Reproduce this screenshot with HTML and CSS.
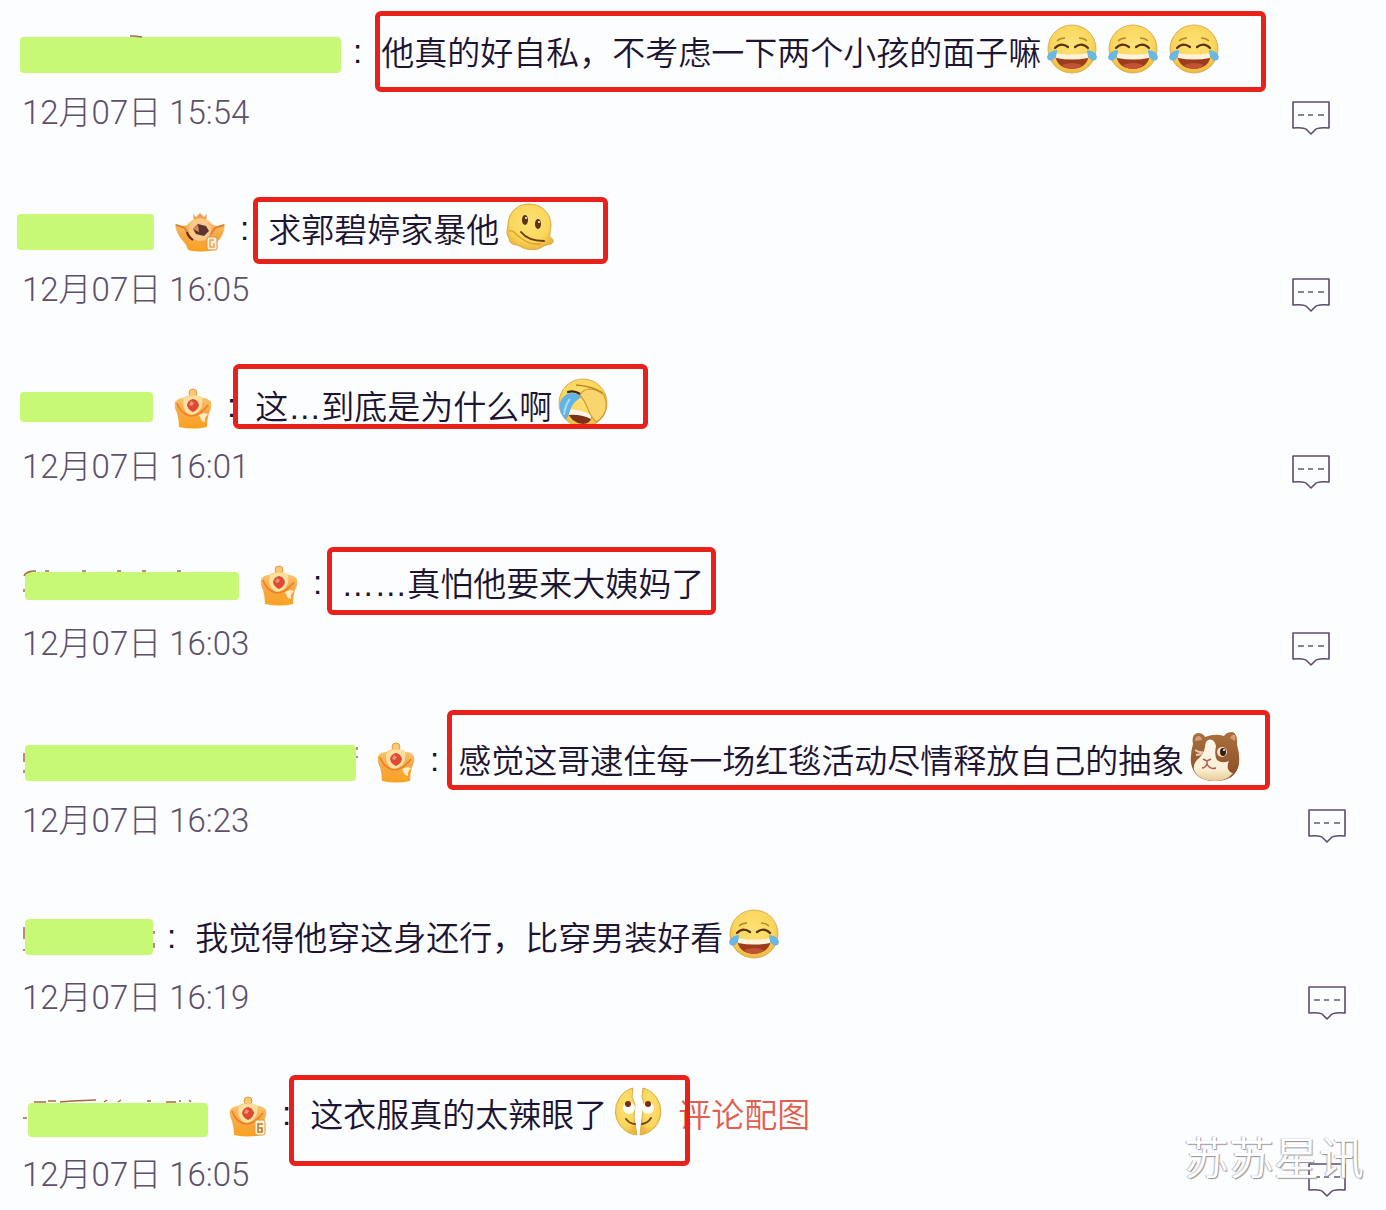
FILE: index.html
```
<!DOCTYPE html>
<html lang="zh-CN">
<head>
    <meta charset="UTF-8">
    <meta name="viewport" content="width=device-width, initial-scale=1.0">
    <title>评论</title>
    <link rel="stylesheet" href="styles.css">
</head>
<body>
    <!-- shared icons -->
    <svg class="sprite" aria-hidden="true">
        <defs>
            <radialGradient id="face" cx="0.5" cy="0.4" r="0.6">
                <stop offset="0" stop-color="#fde277"/>
                <stop offset="0.7" stop-color="#fad65c"/>
                <stop offset="1" stop-color="#eeb63c"/>
            </radialGradient>
            <linearGradient id="gold" x1="0" y1="0" x2="0" y2="1">
                <stop offset="0" stop-color="#fbc873"/>
                <stop offset="0.5" stop-color="#f7a848"/>
                <stop offset="1" stop-color="#f9a21f"/>
            </linearGradient>
            <linearGradient id="fur" x1="0" y1="0" x2="0" y2="1">
                <stop offset="0" stop-color="#a9703f"/>
                <stop offset="1" stop-color="#8a4c22"/>
            </linearGradient>
            <linearGradient id="cheek" x1="0" y1="0" x2="0" y2="1">
                <stop offset="0" stop-color="#fdf6ec"/>
                <stop offset="0.7" stop-color="#fbf0d6"/>
                <stop offset="1" stop-color="#e5cd95"/>
            </linearGradient>
        </defs>
        <symbol id="joy" viewBox="0 0 50 50">
            <circle cx="25" cy="25" r="24" fill="url(#face)" stroke="#d9b25a" stroke-width="1"/>
            <path d="M10 17q3-3 8-3M32 14q5 0 8 3" fill="none" stroke="#b98a2c" stroke-width="1.5"/>
            <path d="M8 24q6-6 13-1M28 23q7-5 13 1" fill="none" stroke="#5a3211" stroke-width="2.2" stroke-linecap="round"/>
            <path d="M8 30q17 3 34 0q-1 14-17 15q-16-1-17-15z" fill="#9c3c1c"/>
            <path d="M8 29q17 3 34 0l-1 5q-16 3-32 0z" fill="#fff3dc"/>
            <path d="M15 41q10-4 20 0q-4 4-10 4t-10-4z" fill="#c25236"/>
            <path d="M10 26q-9 1-10 7q1 5 6 3q4-3 4-10zM40 26q9 1 10 7q-1 5-6 3q-4-3-4-10z" fill="#69b7e3"/>
        </symbol>
        <symbol id="melt" viewBox="0 0 50 50">
            <path d="M3 24C3 11 13 3 24 3c12 0 21 8 22 20c0 6-2 10-1 14c4 0 4 5 1 6c-4 1-6 1-9 3c-4 3-10 3-15 2c-4 0-6-3-10-4c-5 0-8-3-8-7c-3-3-2-8-1-13z" fill="url(#face)" stroke="#dda93a" stroke-width="1"/>
            <path d="M4 30q4-1 6 2t6 5q8 7 20 6" fill="none" stroke="#e0a32f" stroke-width="1.6"/>
            <ellipse cx="20" cy="19" rx="3" ry="5" fill="#5b3413"/>
            <ellipse cx="33" cy="23" rx="3" ry="5" fill="#5b3413"/>
            <circle cx="21" cy="17" r="1" fill="#fff"/>
            <circle cx="34" cy="21" r="1" fill="#fff"/>
            <path d="M16 31q7 9 23 9" fill="none" stroke="#6d3d12" stroke-width="2" stroke-linecap="round"/>
        </symbol>
        <symbol id="palm" viewBox="0 0 50 50">
            <circle cx="25" cy="25" r="24" fill="url(#face)" stroke="#d9b25a" stroke-width="1"/>
            <path d="M9 33q12 0 25 6q-2 7-9 7q-12-1-16-13z" fill="#7d3218"/>
            <path d="M10 31q12 0 24 6l-1 4q-11-5-22-4z" fill="#fff6e6"/>
            <path d="M9 16q8-3 15 3q-8 4-11 11q-2 7-5 12q-8-8-6-17q2-6 7-9z" fill="#62b4e6"/>
            <path d="M12 21q-5 6-6 16" fill="none" stroke="#a8daf5" stroke-width="2"/>
            <path d="M10 14q6-2 12 2" fill="none" stroke="#3f2410" stroke-width="2.2" stroke-linecap="round"/>
            <path d="M22 17q3-6 10-6q8 1 14 6q4 9 1 17q-3 7-9 10q-5-5-8-13q-3-8-8-14z" fill="#f8d56d" stroke="#cf9c37" stroke-width="1.2"/>
            <path d="M18 7q16 1 27 8" fill="none" stroke="#b88528" stroke-width="1.4"/>
        </symbol>
        <symbol id="hamster" viewBox="0 0 50 50">
            <path d="M3 12Q1 2 8 1q5 0 7 4q10-4 19-1q2-4 9-4q5 3 4 13q3 9 2 19q-3 17-24 17Q4 49 1 31q-1-9 2-19z" fill="url(#fur)"/>
            <path d="M5 9q0-5 4-5q3 1 3 4zM40 6q2-4 5-3q1 3 0 6z" fill="#d79d75"/>
            <path d="M18 8q6-2 8 6q-2 9 1 14q5 4 12 1q-2 3-1 8q2 4 5 4q-6 8-18 8Q9 49 4 38q-1-6 3-10q7-6 8-13q0-5 3-7z" fill="url(#cheek)"/>
            <ellipse cx="32" cy="20" rx="5" ry="5" fill="#f2dfce"/>
            <ellipse cx="33" cy="20" rx="3" ry="4" fill="#3d1c10"/>
            <circle cx="34" cy="18" r="1" fill="#fff"/>
            <path d="M5 18q4 3 8 2M6 23q4 0 6-2" fill="none" stroke="#f0c9b8" stroke-width="1.8"/>
            <path d="M13 27l4 2l4-2M17 29v3q-2 4-5 4M17 32q3 6 9 4" fill="none" stroke="#b05a48" stroke-width="1.5"/>
        </symbol>
        <symbol id="split" viewBox="0 0 50 50">
            <path d="M20 2l-1 9l3 7l-1 14l3 17A24 24 0 0 1 20 2z" fill="url(#face)" stroke="#d8ae4b" stroke-width="1"/>
            <path d="M30 2l-1 9l2 7l-2 14l-2 17A24 24 0 0 0 30 2z" fill="url(#face)" stroke="#d8ae4b" stroke-width="1"/>
            <circle cx="16" cy="22" r="6" fill="#fffdf6"/>
            <circle cx="35" cy="22" r="6" fill="#fffdf6"/>
            <circle cx="15" cy="18" r="3" fill="#7c2a14"/>
            <circle cx="35" cy="18" r="3" fill="#7c2a14"/>
            <path d="M13 33q4 5 9 5M29 38q6-1 9-6" fill="none" stroke="#7a4815" stroke-width="2" stroke-linecap="round"/>
        </symbol>
        <symbol id="crown" viewBox="0 0 38 42">
            <circle cx="19" cy="5" r="4" fill="#fbc878" stroke="#e99b3c" stroke-width="1"/>
            <path d="M1 14q3-4 8-4q4-3 10-3t10 3q5 0 8 4q1 6-2 11q-2 7-2 14q-13 3-28 0q0-7-2-14Q0 20 1 14z" fill="url(#gold)"/>
            <path d="M10 10q-3 10 4 16q5 2 9-1q7-5 5-16q-9-3-18 1z" fill="#fde0a0"/>
            <path d="M3 15q3 10 13 13q10 0 18-11" fill="none" stroke="#e98322" stroke-width="1.6"/>
            <path d="M19 11q5 1 6 6q-1 5-6 7q-5-2-6-7q1-5 6-6z" fill="#dc4a32"/>
            <path d="M17 13l3 2l-2 3l-3-1z" fill="#f2907b"/>
            <path d="M25 27l5-2l4 1l-3 4v4l-3-1z" fill="#fdebc8"/>
        </symbol>
        <symbol id="crown-6" viewBox="0 0 38 42">
            <use href="#crown" width="38" height="42"/>
            <rect x="26" y="24" width="10" height="15" rx="2" fill="#fff4dd" stroke="#e09a3e" stroke-width="1"/>
            <path d="M34 28h-5v8h4v-4h-3" fill="none" stroke="#b9772b" stroke-width="1.6"/>
        </symbol>
        <symbol id="ingot" viewBox="0 0 50 40">
            <path d="M18 2l3 3l4-4l4 4l3-3l-1 8H19z" fill="#ee9f55"/>
            <path d="M0 12q5 3 12 1q6-7 13-7t13 7q7 2 12-1q-1 11-7 17q-3 4-4 9q-14 3-26 0q-1-5-5-9Q1 22 0 12z" fill="url(#gold)"/>
            <path d="M1 13l9 3q3 8 8 12M49 13l-9 3q-3 5-6 8" fill="none" stroke="#dd8236" stroke-width="2"/>
            <circle cx="25" cy="18" r="11" fill="#fac98b"/>
            <path d="M12 20q1 5 6 8" fill="none" stroke="#69290f" stroke-width="2"/>
            <path d="M18 17l5-5l8 2l3 5l-5 5l-8-2z" fill="#5c3431"/>
            <path d="M18 17l5-4l1 7z" fill="#e78a4a"/>
            <rect x="32" y="25" width="10" height="13" rx="2" fill="#fff0d8" stroke="#dc9144" stroke-width="1"/>
            <path d="M39 28h-4v7h4v-4" fill="none" stroke="#e5a45b" stroke-width="1.4"/>
        </symbol>
        <symbol id="reply" viewBox="0 0 40 36">
            <path d="M2 2h36v26q-12-1-14 2l-4 4l-4-4q-2-3-14-2z" fill="none" stroke="#5b4b70" stroke-width="1.6" stroke-linejoin="round"/>
            <path d="M7 15h6M17 15h5M27 15h6" stroke="#62597c" stroke-width="1.4"/>
        </symbol>
    </svg>

    <main class="comments">
        <article class="comment">
            <div class="line">
                <span class="name name-1">
                    <svg class="traces" viewBox="0 0 321 36"><path d="M110-1h4l8 1"/></svg>
                </span>
                <span class="colon">:</span>
                <p class="text">他真的好自私，不考虑一下两个小孩的面子嘛<svg class="emoji"><use href="#joy"/></svg><svg class="emoji"><use href="#joy"/></svg><svg class="emoji"><use href="#joy"/></svg><span class="mark mark-1"></span></p>
            </div>
            <div class="meta">
                <time>12月07日 15:54</time>
                <button type="button" class="reply" aria-label="回复"><svg><use href="#reply"/></svg></button>
            </div>
        </article>

        <article class="comment">
            <div class="line">
                <span class="name name-2"></span>
                <svg class="badge badge-wide"><use href="#ingot"/></svg>
                <span class="colon">:</span>
                <p class="text">求郭碧婷家暴他<svg class="emoji"><use href="#melt"/></svg><span class="mark mark-2"></span></p>
            </div>
            <div class="meta">
                <time>12月07日 16:05</time>
                <button type="button" class="reply" aria-label="回复"><svg><use href="#reply"/></svg></button>
            </div>
        </article>

        <article class="comment">
            <div class="line">
                <span class="name name-3"></span>
                <svg class="badge"><use href="#crown"/></svg>
                <span class="colon">:</span>
                <p class="text">这…到底是为什么啊<svg class="emoji"><use href="#palm"/></svg><span class="mark mark-3"></span></p>
            </div>
            <div class="meta">
                <time>12月07日 16:01</time>
                <button type="button" class="reply" aria-label="回复"><svg><use href="#reply"/></svg></button>
            </div>
        </article>

        <article class="comment">
            <div class="line">
                <span class="name name-4">
                    <svg class="traces" viewBox="0 0 214 28"><path d="M-1 4q2-5 12-5M-1 17v3M20-1h4M57-1h4M92-1h4M117-1h4M152-1h4"/></svg>
                </span>
                <svg class="badge"><use href="#crown"/></svg>
                <span class="colon">:</span>
                <p class="text">……真怕他要来大姨妈了<span class="mark mark-4"></span></p>
            </div>
            <div class="meta">
                <time>12月07日 16:03</time>
                <button type="button" class="reply" aria-label="回复"><svg><use href="#reply"/></svg></button>
            </div>
        </article>

        <article class="comment comment-wide">
            <div class="line">
                <span class="name name-5">
                    <svg class="traces" viewBox="0 0 331 36"><path d="M-1 8v9M-1 25v3M332 2v3M332 11v2"/></svg>
                </span>
                <svg class="badge"><use href="#crown"/></svg>
                <span class="colon">:</span>
                <p class="text">感觉这哥逮住每一场红毯活动尽情释放自己的抽象<svg class="emoji"><use href="#hamster"/></svg><span class="mark mark-5"></span></p>
            </div>
            <div class="meta">
                <time>12月07日 16:23</time>
                <button type="button" class="reply" aria-label="回复"><svg><use href="#reply"/></svg></button>
            </div>
        </article>

        <article class="comment comment-wide">
            <div class="line">
                <span class="name name-6">
                    <svg class="traces" viewBox="0 0 128 36"><path d="M-1 8v12M-1 30v2M129 12v3M129 24v5"/></svg>
                </span>
                <span class="colon">:</span>
                <p class="text">我觉得他穿这身还行，比穿男装好看<svg class="emoji"><use href="#joy"/></svg></p>
            </div>
            <div class="meta">
                <time>12月07日 16:19</time>
                <button type="button" class="reply" aria-label="回复"><svg><use href="#reply"/></svg></button>
            </div>
        </article>

        <article class="comment comment-wide">
            <div class="line">
                <span class="name name-7">
                    <svg class="traces" viewBox="0 0 180 34"><path d="M-5 15h4M6-1h12M20-2h8M32-1l12-1l24-1M76-1l3-2M90-1l3-2M119-2h4M138-1h10M152-3v2M161-3l2 2"/></svg>
                </span>
                <svg class="badge"><use href="#crown-6"/></svg>
                <span class="colon">:</span>
                <p class="text">这衣服真的太辣眼了<svg class="emoji"><use href="#split"/></svg><a class="picture-link" href="#">评论配图</a><span class="mark mark-7"></span></p>
            </div>
            <div class="meta">
                <time>12月07日 16:05</time>
                <button type="button" class="reply" aria-label="回复"><svg><use href="#reply"/></svg></button>
            </div>
        </article>

        <div class="watermark">苏苏星讯</div>
    </main>
</body>
</html>
```

FILE: styles.css
```
* {
    box-sizing: border-box;
}
body {
    margin: 0;
    background-color: #fcfdff;
    color: #1c1430;
    font-family: "Liberation Sans", "Noto Sans CJK SC", sans-serif;
    font-size: 33px;
    font-weight: 350;
}
.sprite {
    position: absolute;
    width: 0;
    height: 0;
}
.comments {
    position: relative;
}
.comment {
    padding: 24px 55px 35px 0;
}
.comment-wide {
    padding-right: 39px;
}
.comment:nth-of-type(7) {
    padding-bottom: 0;
}
.line {
    display: flex;
    align-items: center;
    height: 56px;
    white-space: nowrap;
}

/* covered user names */
.name {
    position: relative;
    flex-shrink: 0;
    height: 36px;
    margin-top: 6px;
    border-radius: 4px;
    background-color: #c8f976;
}
.name-1 {
    width: 321px;
    margin-left: 20px;
}
.name-2 {
    width: 137px;
    margin-left: 17px;
}
.name-3 {
    width: 133px;
    height: 30px;
    margin-top: 2px;
    margin-left: 20px;
}
.name-4 {
    width: 214px;
    height: 28px;
    margin-left: 25px;
}
.name-5 {
    width: 331px;
    margin-left: 25px;
}
.name-6 {
    width: 128px;
    margin: 0 2px 0 25px;
}
.name-7 {
    width: 180px;
    height: 34px;
    margin-top: 12px;
    margin-left: 28px;
}
.traces {
    display: block;
    width: 100%;
    height: 100%;
    overflow: visible;
    fill: none;
    stroke: #a56a45;
    stroke-width: 1.5;
}
.badge {
    flex-shrink: 0;
    width: 38px;
    height: 42px;
    margin: 6px 3px 0 21px;
}
.badge-wide {
    width: 50px;
    height: 40px;
}
.colon {
    margin: 0 19px 0 12px;
}
.text {
    position: relative;
    display: flex;
    align-items: center;
    height: 56px;
    margin: 0;
    padding-bottom: 3px;
}
.emoji {
    width: 50px;
    height: 50px;
    margin: 0 5px 3px 6px;
}
.picture-link {
    margin-left: 10px;
    color: #e0604f;
    text-decoration: none;
}

/* red frames drawn over the comments */
.mark {
    position: absolute;
    border: 5px solid #e8211b;
    border-radius: 6px;
    pointer-events: none;
}
.mark-1 {
    top: -13px;
    left: -6px;
    width: 891px;
    height: 81px;
}
.mark-2 {
    top: -4px;
    left: -15px;
    width: 355px;
    height: 67px;
}
.mark-3 {
    top: -14px;
    left: -22px;
    width: 415px;
    height: 65px;
}
.mark-4 {
    top: -8px;
    left: -14px;
    width: 389px;
    height: 68px;
}
.mark-5 {
    top: -22px;
    left: -11px;
    width: 823px;
    height: 80px;
}
.mark-7 {
    top: -11px;
    left: -21px;
    width: 401px;
    height: 91px;
}

.meta {
    display: flex;
    justify-content: space-between;
    align-items: center;
    height: 62px;
    padding-left: 22px;
    color: #5d5069;
    font-family: Roboto, "Noto Sans CJK SC", sans-serif;
    font-weight: 300;
}
.meta time {
    padding-bottom: 3px;
}
.reply {
    width: 40px;
    height: 36px;
    margin-top: 14px;
    padding: 0;
    border: 0;
    background: none;
    cursor: pointer;
}
.reply svg {
    display: block;
    width: 40px;
    height: 36px;
}
.watermark {
    position: absolute;
    right: 22px;
    bottom: 10px;
    color: #ffffff;
    font-size: 45px;
    line-height: 68px;
    text-shadow: 1px 1px 1px #8f8f98, -1px 0 1px #b4b4bc;
}
```
